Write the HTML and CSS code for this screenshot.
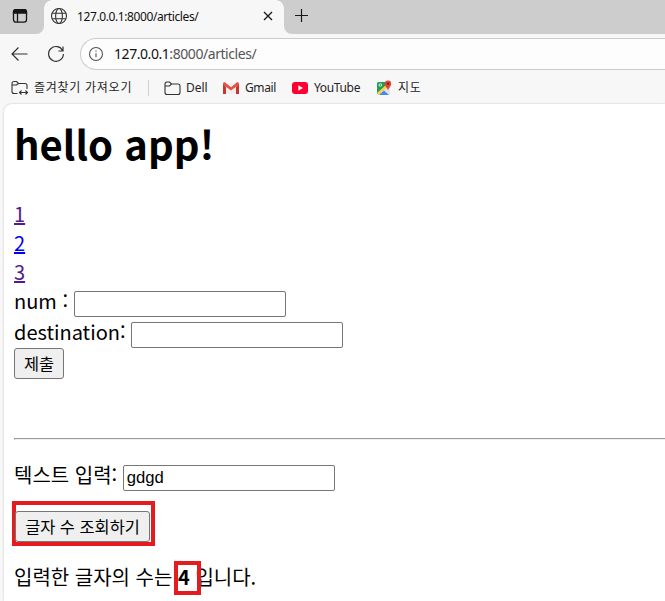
FILE: index.html
```html
<!DOCTYPE html>
<html lang="ko">
<head>
<meta charset="utf-8">
<title>127.0.0.1:8000/articles/</title>
<link rel="stylesheet" href="styles.css">
</head>
<body>
<div class="browser">
  <header class="tabs">
    <div class="tab-actions">
      <svg width="16" height="16" viewBox="0 0 16 16" fill="none" stroke="#151515" stroke-width="1.3"><rect x="1.5" y="1.6" width="13" height="12.6" rx="2.4"/><path d="M1.5 4V3.8a2.2 2.2 0 0 1 2.2-2.2h8.600a2.200 2.200 0 0 1 2.200 2.200V5H1.500z" fill="#151515"/><path d="M5.500 5v9"/></svg>
    </div>
    <div class="tab">
      <svg class="globe" width="18" height="18" viewBox="0 0 18 18" fill="none" stroke="#333" stroke-width="1.100"><circle cx="9" cy="9" r="7.500"/><ellipse cx="9" cy="9" rx="3.400" ry="7.500"/><path d="M2.200 6.300h13.600M2.200 11.700h13.600"/></svg>
      <span class="tab-title">127.0.0.1:8000/articles/</span>
      <svg class="close" width="10" height="10" viewBox="0 0 10 10" stroke="#181818" stroke-width="1.300"><path d="M1 1l8 8M9 1L1 9"/></svg>
    </div>
    <div class="tab-new">
      <svg width="15" height="15" viewBox="0 0 15 15" stroke="#181818" stroke-width="1.200"><path d="M7.500 1v13M1 7.500h13"/></svg>
    </div>
  </header>
  <nav class="toolbar">
    <svg class="back" width="17" height="16" viewBox="0 0 17 16" fill="none" stroke="#333" stroke-width="1.200"><path d="M7.500 1.500L1 8l6.500 6.500M1 8h15.500"/></svg>
    <svg class="reload" width="18" height="18" viewBox="0 0 18 18" fill="none" stroke="#333" stroke-width="1.200"><path d="M15.800 6A7.400 7.400 0 1 0 16.400 9M16 1.500V6h-4.500"/></svg>
    <div class="address">
      <svg width="16" height="16" viewBox="0 0 16 16" fill="none" stroke="#555" stroke-width="1.100"><circle cx="8" cy="8" r="6.500"/><path d="M8 7.200v4M8 4.600v1.200"/></svg>
      <span><b>127.0.0.1</b>:8000/articles/</span>
    </div>
  </nav>
  <nav class="bookmarks">
    <svg class="import" width="18" height="16" viewBox="0 0 18 16" fill="none" stroke="#333" stroke-width="1.100"><path d="M6.500 13.500H3A2 2 0 0 1 1 11.500V3.500a2 2 0 0 1 2-2h2.500l2 2H14a2 2 0 0 1 2 2V9M1 5h4.500l2-1.500M8.500 12.500h8M10.500 10.500l-2 2 2 2M14.500 10.500l2 2-2 2"/></svg>
    <span class="import-label">즐겨찾기 가져오기</span>
    <i class="divider"></i>
    <svg class="folder" width="17" height="15" viewBox="0 0 17 15" fill="none" stroke="#333" stroke-width="1.100"><path d="M1 5V3a2 2 0 0 1 2-2h2.500l2 2H14a2 2 0 0 1 2 2v6.500a2 2 0 0 1-2 2H3a2 2 0 0 1-2-2V5h4.500l2-2"/></svg>
    <span class="dell-label">Dell</span>
    <svg class="gmail" width="16" height="12" viewBox="0 0 16 12"><path d="M0 1.500V12h3V5z" fill="#c5372c"/><path d="M16 1.500V12h-3V5z" fill="#c5372c"/><path d="M3 4.500V12h10V4.500L8 8.500z" fill="#f0eeee"/><path d="M0 1.500Q.6-.5 2.500.6L8 5l5.500-4.400Q15.400-.5 16 1.500L15.500 3 8 8.400.5 3z" fill="#e05345"/><path d="M3 0.900h10L8 5z" fill="#efefef"/></svg>
    <span class="gmail-label">Gmail</span>
    <svg class="youtube" width="16" height="12" viewBox="0 0 16 12"><rect width="16" height="12" rx="3" fill="#ff0033"/><path d="M6.300 3.300v5.400L11 6z" fill="#fff"/></svg>
    <span class="youtube-label">YouTube</span>
    <svg class="maps" width="16" height="16" viewBox="0 0 16 16"><rect x="1" y="2" width="13" height="13" rx="1.500" fill="#e5e5e5"/><path d="M1 3.500A1.500 1.500 0 0 1 2.500 2H10v4L1 14z" fill="#249c55"/><path d="M1 13l9-8 1.500 2L3 15z" fill="#ffd04b"/><path d="M3 15l5-4.600L13 15z" fill="#4688f1"/><circle cx="4.300" cy="5" r="1.300" fill="none" stroke="#fff" stroke-width=".8"/><path d="M12 10.500C11.500 8 8.800 6.500 8.800 3.700a3.200 3.200 0 0 1 6.400 0C15.200 6.500 12.500 8 12 10.500z" fill="#df4638"/><circle cx="12" cy="3.700" r="1.200" fill="#7c221b"/></svg>
    <span class="maps-label">지도</span>
  </nav>
  <main class="page">
    <h1>hello app!</h1>
    <a class="visited" href="#1">1</a>
    <a href="#2">2</a>
    <a class="visited" href="#3">3</a>
    <form>
      <label class="row"><span>num :</span><input type="text"></label>
      <label class="row"><span>destination:</span><input type="text"></label>
      <button type="button">제출</button>
    </form>
    <hr>
    <label class="row"><span>텍스트 입력:</span><input type="text" value="gdgd"></label>
    <div class="action"><button class="count" type="button">글자 수 조회하기</button></div>
    <p>입력한 글자의 수는 <strong>4</strong> 입니다.</p>
  </main>
</div>
</body>
</html>
```
FILE: styles.css
```css
*, *::before, *::after { box-sizing: border-box; }
body { margin: 0; overflow: hidden; background: #f7f7f7; }
svg { display: block; flex: none; }
span { white-space: nowrap; }
.browser { width: 665px; height: 601px; overflow: hidden; display: flex; flex-direction: column; font-family: "Noto Sans", "Noto Sans CJK KR", sans-serif; color: #252525; }
.tabs { height: 34px; flex: none; display: flex; background: #f7f7f7; }
.tab-actions { width: 44px; background: #cdcdcd; border-bottom-right-radius: 8px; padding: 8px 0 0 12px; }
.tab { width: 240px; display: flex; align-items: center; background: #f7f7f7; position: relative; padding: 0 11px 2px 6px; }
.tab::before, .tab::after { content: ""; position: absolute; top: 0; width: 8px; height: 8px; }
.tab::before { left: 0; background: radial-gradient(circle at 100% 100%, #f7f7f7 7.5px, #cdcdcd 8px); }
.tab::after { right: 0; background: radial-gradient(circle at 0 100%, #f7f7f7 7.5px, #cdcdcd 8px); }
.tab-title { font-size: 12px; letter-spacing: -.4px; margin-left: 9px; color: #111; }
.close { margin-left: auto; }
.tab-new { flex: 1; background: #cdcdcd; border-bottom-left-radius: 8px; padding: 8px 0 0 10px; }
.toolbar { height: 38px; flex: none; display: flex; align-items: center; padding: 2px 0 0 11px; }
.reload { margin-left: 19px; }
.address { margin-left: 15px; flex: 1; height: 32px; border: 1px solid #cbcbcb; border-right: 0; border-radius: 16px 0 0 16px; background: #fdfdfd; display: flex; align-items: center; padding: 0 0 1px 7px; font-size: 14px; letter-spacing: -.44px; color: #555; }
.address span { margin-left: 10px; }
.address b { font-weight: 400; color: #111; }
.bookmarks { height: 32px; flex: none; display: flex; align-items: center; padding-left: 11px; font-size: 12px; }
.bookmarks span { margin-bottom: 2px; }
.import-label { margin-left: 5px; width: 100px; letter-spacing: .75px; }
.divider { width: 1px; height: 16px; background: #cfcfcf; margin: 0 15px 0 14px; }
.folder { margin-right: 5px; }
.dell-label { width: 37px; }
.gmail { margin-right: 6px; }
.gmail-label { width: 47px; letter-spacing: -.4px; }
.youtube { margin-right: 6px; }
.youtube-label { width: 62px; letter-spacing: -.35px; }
.maps { margin-right: 6px; }
.maps-label { letter-spacing: .75px; }
.page { flex: 1; margin-left: 4px; padding: 10px 0 0 10px; background: #fff; border-radius: 8px 0 0; box-shadow: 0 0 2px #bbb; color: #000; font: 20px/29px "Noto Sans CJK KR", sans-serif; }
h1 { font-size: 40px; line-height: 58px; margin: 0 0 27px; }
.page a { display: block; width: max-content; color: #00e; text-decoration-thickness: 2px; }
.page a.visited { color: #551a8b; }
.row { display: flex; align-items: flex-start; height: 31px; gap: 5.6px; }
input { width: 212px; height: 26px; margin: 5px 0 0; padding: 1px 3px; border: 1px solid #767676; border-radius: 2px; background: #fff; color: #000; font: 16.667px "Liberation Sans", sans-serif; }
button { display: block; width: 50px; height: 31px; padding: 0; border: 1px solid #767676; border-radius: 3px; background: #efefef; color: #000; font: 16.4px/27px "Noto Sans CJK KR", sans-serif; }
hr { height: 2px; margin: 59px -2px 20px 0; border: 1px solid; border-color: #9a9a9a #eee #eee #9a9a9a; }
.action { width: 143px; height: 45px; margin: 10px 0 0 -2px; padding: 6px 0 0; border: 4px solid #e51c1f; }
.count { width: 135px; margin-left: -1px; }
p { margin: 16px 0 0; white-space: nowrap; }
strong { position: relative; }
strong::after { content: ""; position: absolute; left: -4px; top: -1px; width: 27px; height: 34px; border: 4px solid #e51c1f; }
```
